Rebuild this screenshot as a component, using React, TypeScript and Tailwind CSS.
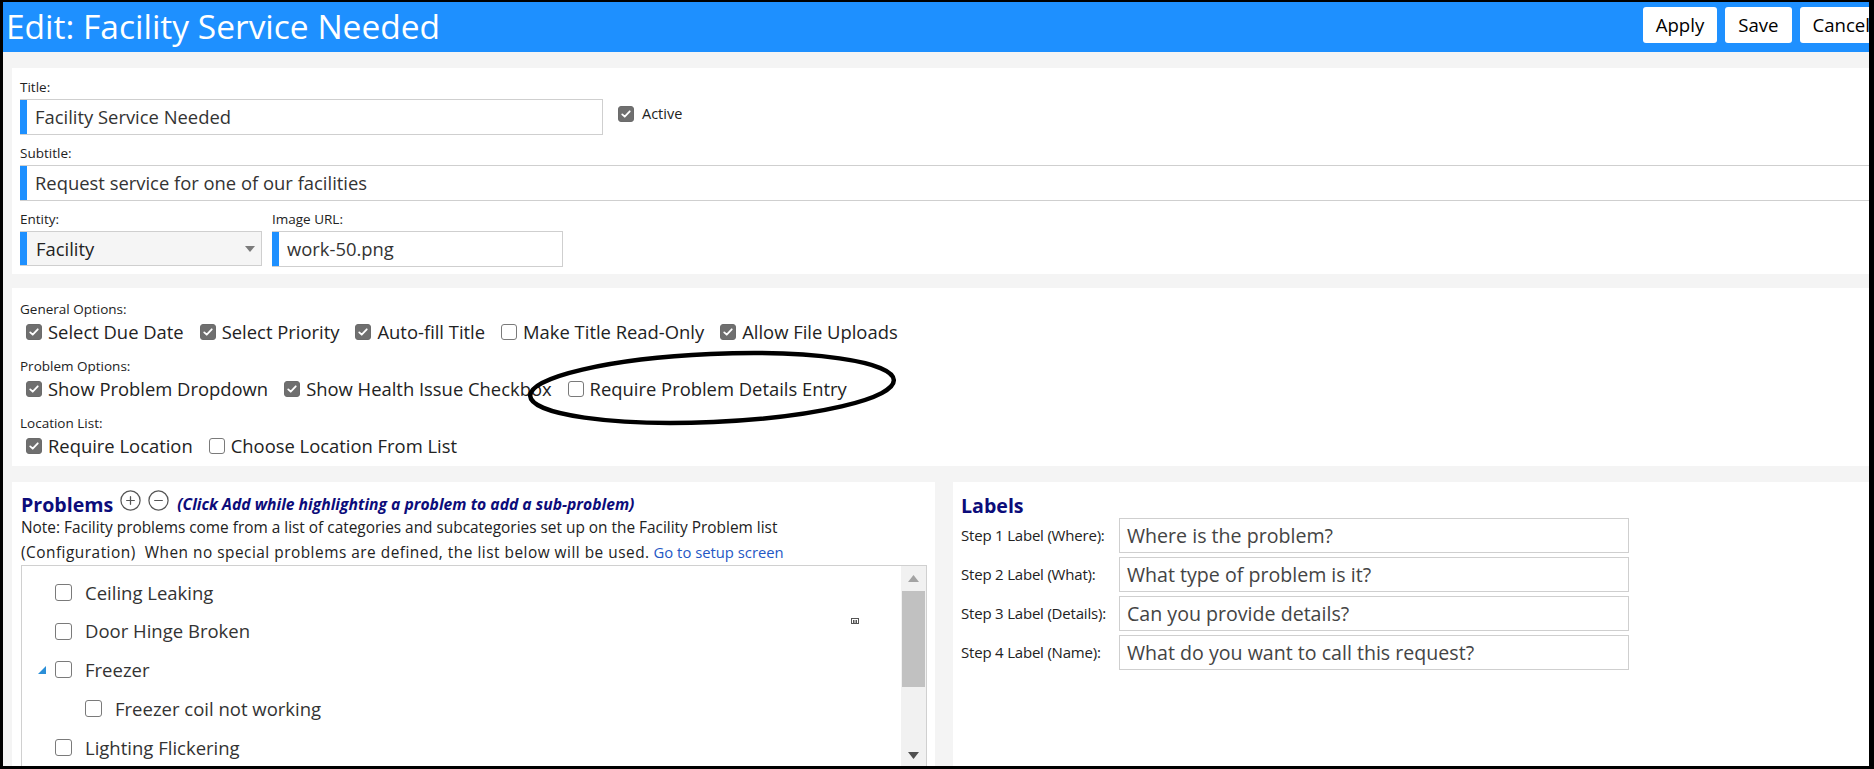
import { CircleMinus, CirclePlus } from "lucide-react";

type Opt = [string, boolean];

const GENERAL: Opt[] = [
  ["Select Due Date", true],
  ["Select Priority", true],
  ["Auto-fill Title", true],
  ["Make Title Read-Only", false],
  ["Allow File Uploads", true],
];
const PROBLEM: Opt[] = [
  ["Show Problem Dropdown", true],
  ["Show Health Issue Checkbox", true],
  ["Require Problem Details Entry", false],
];
const LOCATION: Opt[] = [
  ["Require Location", true],
  ["Choose Location From List", false],
];

const TREE = [
  { label: "Ceiling Leaking", depth: 0 },
  { label: "Door Hinge Broken", depth: 0 },
  { label: "Freezer", depth: 0, open: true },
  { label: "Freezer coil not working", depth: 1 },
  { label: "Lighting Flickering", depth: 0 },
];

const STEPS = [
  ["Step 1 Label (Where):", "Where is the problem?"],
  ["Step 2 Label (What):", "What type of problem is it?"],
  ["Step 3 Label (Details):", "Can you provide details?"],
  ["Step 4 Label (Name):", "What do you want to call this request?"],
];

function Box({ checked, big }: { checked: boolean; big?: boolean }) {
  const base = big ? "h-[17px] w-[17px]" : "h-[16px] w-[16px]";
  return (
    <span
      className={`${base} inline-flex shrink-0 items-center justify-center rounded-[3px] border ${
        checked ? "border-[#6b6b6b] bg-[#6f6f6f]" : "border-[#7a7a7a] bg-white"
      }`}
    >
      {checked && (
        <svg viewBox="0 0 16 16" className="h-[12px] w-[12px]">
          <path d="M3 8.5 L6.3 11.6 L13 4.4" fill="none" stroke="white" strokeWidth="2.4" strokeLinecap="round" strokeLinejoin="round" />
        </svg>
      )}
    </span>
  );
}

function OptGroup({ title, items }: { title: string; items: Opt[] }) {
  return (
    <div>
      <div className="h-[18px] text-[13.5px] leading-[18px] text-[#222]">{title}</div>
      <div className="flex h-[27px] items-center gap-[16px] pl-[6px]">
        {items.map(([label, on]) => (
          <div key={label} className="flex items-center gap-[6px]">
            <Box checked={on} />
            <span className="text-[18.4px] text-[#222]">{label}</span>
          </div>
        ))}
      </div>
    </div>
  );
}

function Field({ value, className }: { value: string; className: string }) {
  return (
    <div className={`flex h-[36px] border border-l-0 border-[#cfcfcf] bg-white ${className}`}>
      <span className="w-[7px] shrink-0 bg-[#1e90ff]" />
      <span className="flex items-center pl-[8px] text-[18.4px] text-[#333]">{value}</span>
    </div>
  );
}

export default function App() {
  return (
    <div className="h-[769px] w-[1874px] overflow-hidden bg-black pb-[3px] pl-[3px] pr-[5px] pt-[2px] font-['Open_Sans',sans-serif]">
      <div className="relative h-full w-full overflow-hidden bg-[#f4f4f4]">
        <div className="w-[1884px]">
          {/* header bar */}
          <div className="flex h-[50px] items-center bg-[#1e90ff] pl-[3px] pr-[4px]">
            <h1 className="text-[33.5px] leading-none text-white">Edit: Facility Service Needed</h1>
            <div className="ml-auto flex gap-[8px] pb-[4px]">
              {["Apply", "Save", "Cancel"].map((b) => (
                <button key={b} className="h-[36px] rounded-[3px] bg-white px-[13px] text-[18.6px] text-black">
                  {b}
                </button>
              ))}
            </div>
          </div>

          <div className="px-[9px] pt-[16px]">
            {/* basic fields */}
            <div className="bg-white px-[8px] pb-[7px] pt-[10px]">
              <div className="h-[19px] text-[13.5px] leading-[19px] text-[#222]">Title:</div>
              <div className="mt-[2px] flex items-start">
                <Field value="Facility Service Needed" className="w-[583px]" />
                <label className="ml-[15px] mt-[4px] flex items-center gap-[8px]">
                  <Box checked />
                  <span className="text-[14.5px] text-[#222]">Active</span>
                </label>
              </div>
              <div className="mt-[9px] h-[19px] text-[13.5px] leading-[19px] text-[#222]">Subtitle:</div>
              <Field value="Request service for one of our facilities" className="mt-[2px] w-full" />
              <div className="mt-[9px] flex gap-[10px]">
                <div>
                  <div className="h-[19px] text-[13.5px] leading-[19px] text-[#222]">Entity:</div>
                  <div className="mt-[2px] flex h-[35px] w-[242px] border border-l-0 border-[#cfcfcf] bg-[#f5f5f5]">
                    <span className="w-[7px] shrink-0 bg-[#1e90ff]" />
                    <span className="flex flex-1 items-center pl-[9px] text-[18.4px] text-[#222]">Facility</span>
                    <span className="flex items-center pr-[6px]">
                      <svg width="10" height="6" viewBox="0 0 10 6">
                        <path d="M0 0 H10 L5 6 Z" fill="#7b7b7b" />
                      </svg>
                    </span>
                  </div>
                </div>
                <div>
                  <div className="h-[19px] text-[13.5px] leading-[19px] text-[#222]">Image URL:</div>
                  <Field value="work-50.png" className="mt-[2px] w-[291px]" />
                </div>
              </div>
            </div>

            {/* options */}
            <div className="mt-[14px] flex flex-col gap-[12px] bg-white px-[8px] pb-[7px] pt-[12px]">
              <OptGroup title="General Options:" items={GENERAL} />
              <OptGroup title="Problem Options:" items={PROBLEM} />
              <OptGroup title="Location List:" items={LOCATION} />
            </div>

            {/* problems + labels */}
            <div className="mt-[16px] flex gap-[18px]">
              <div className="h-[300px] w-[923px] bg-white pl-[9px] pr-[8px] pt-[11px]">
                <div className="flex h-[23px] items-center">
                  <span className="text-[19.6px] font-bold text-[#0c0c7a]">Problems</span>
                  <CirclePlus className="ml-[6px] h-[23px] w-[23px] -translate-y-[4px] text-[#555]" strokeWidth={1.3} />
                  <CircleMinus className="ml-[5px] h-[23px] w-[23px] -translate-y-[4px] text-[#555]" strokeWidth={1.3} />
                  <span className="ml-[7px] text-[15.7px] font-bold italic text-[#0c0c7a]">
                    (Click Add while highlighting a problem to add a sub-problem)
                  </span>
                </div>
                <div className="text-[15.4px] leading-[24px] text-[#222]">
                  Note: Facility problems come from a list of categories and subcategories set up on the Facility Problem list
                  <br />
                  <span className="tracking-[0.5px]">
                    (Configuration)&nbsp; When no special problems are defined, the list below will be used.
                  </span>{" "}
                  <span className="text-[14.8px] text-[#2457c5]">Go to setup screen</span>
                </div>
                <div className="relative flex h-[208px] border border-[#d0d0d0] bg-white">
                  <div className="flex-1 pt-[7px]">
                    {TREE.map((t) => (
                      <div key={t.label} className="flex h-[38.8px] items-center">
                        <span className="flex w-[33px] justify-end pr-[9px]">
                          {t.open && (
                            <svg width="8" height="8" viewBox="0 0 8 8">
                              <path d="M8 0 V8 H0 Z" fill="#2b8fd8" />
                            </svg>
                          )}
                        </span>
                        <span className={t.depth ? "pl-[30px]" : ""} />
                        <Box checked={false} big />
                        <span className="ml-[13px] text-[18.5px] text-[#333]">{t.label}</span>
                      </div>
                    ))}
                  </div>
                  <svg className="absolute left-[829px] top-[52px]" width="8" height="6" viewBox="0 0 8 6">
                    <rect x="0.5" y="0.5" width="7" height="5" fill="none" stroke="#555" />
                    <rect x="2" y="2" width="1.5" height="3" fill="#555" />
                    <rect x="4.5" y="2" width="1.5" height="3" fill="#555" />
                  </svg>
                  <div className="flex w-[25px] flex-col items-center bg-[#f1f1f1]">
                    <div className="flex h-[25px] items-center justify-center">
                      <svg width="11" height="7" viewBox="0 0 11 7">
                        <path d="M0 7 L5.5 0 L11 7 Z" fill="#a3a3a3" />
                      </svg>
                    </div>
                    <div className="h-[96px] w-[23px] bg-[#c1c1c1]" />
                    <div className="flex-1" />
                    <div className="flex h-[25px] items-center justify-center pb-[8px]">
                      <svg width="11" height="7" viewBox="0 0 11 7">
                        <path d="M0 0 L11 0 L5.5 7 Z" fill="#505050" />
                      </svg>
                    </div>
                  </div>
                </div>
              </div>

              <div className="h-[300px] flex-1 bg-white pl-[8px] pt-[11px]">
                <div className="flex h-[25px] items-center text-[19.6px] font-bold text-[#0c0c7a]">Labels</div>
                <div className="flex flex-col gap-[4px]">
                  {STEPS.map(([l, v]) => (
                    <div key={l} className="flex items-center">
                      <span className="w-[158px] whitespace-nowrap text-[15px] tracking-[-0.2px] text-[#222]">{l}</span>
                      <div className="flex h-[35px] w-[510px] items-center border border-[#cfcfcf] pl-[7px] text-[19.6px] text-[#444]">
                        {v}
                      </div>
                    </div>
                  ))}
                </div>
              </div>
            </div>
          </div>
        </div>

        {/* hand-drawn highlight mark */}
        <svg className="pointer-events-none absolute left-[515px] top-[345px]" width="410" height="95" viewBox="0 0 410 95">
          <ellipse cx="194" cy="41" rx="182" ry="34" fill="none" stroke="black" strokeWidth="4.5" transform="rotate(-2.5 194 41)" />
        </svg>
      </div>
    </div>
  );
}
